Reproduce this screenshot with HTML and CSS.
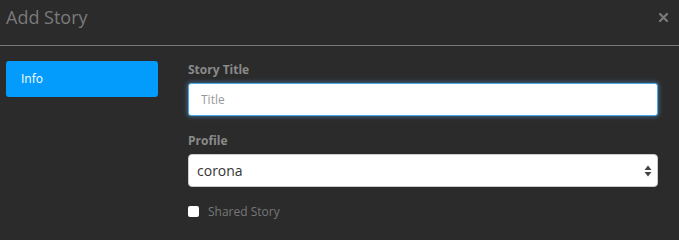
FILE: index.html
```html
<!DOCTYPE html>
<html>
<head>
<meta charset="utf-8">
<link rel="stylesheet" href="styles.css">
</head>
<body>
<div class="modal">
  <div class="header">
    <h1 class="title">Add Story</h1>
    <svg class="close" width="9" height="9" viewBox="0 0 9 9"><path d="M1 1 L8 8 M8 1 L1 8" stroke="#7a7a7a" stroke-width="2.2" stroke-linecap="square"/></svg>
  </div>
  <div class="body">
    <nav class="side">
      <a class="tab active">Info</a>
    </nav>
    <form class="form">
      <label class="label first">Story Title</label>
      <input class="input focus" type="text" placeholder="Title">
      <label class="label second">Profile</label>
      <div class="select">
        <span>corona</span>
        <svg class="arrows" width="8" height="12" viewBox="0 0 8 12"><path d="M4 0.5 L7.5 5 L0.5 5 Z M4 11.5 L7.5 7 L0.5 7 Z" fill="#444"/></svg>
      </div>
      <label class="check"><span class="box"></span>Shared Story</label>
    </form>
  </div>
</div>
</body>
</html>
```
FILE: styles.css
```css
html, body { margin: 0; padding: 0; }
body {
  background: #2b2b2b;
  font-family: "Open Sans", "DejaVu Sans", sans-serif;
  width: 679px;
  height: 240px;
  overflow: hidden;
}
.header {
  height: 46px;
  border-bottom: 1px solid #777;
  display: flex;
  align-items: flex-start;
  justify-content: space-between;
  padding: 0 11px 0 6px;
  box-sizing: border-box;
}
.title {
  margin: 0;
  margin-top: 4px;
  font-size: 18px;
  font-weight: 400;
  color: #7a7a7a;
  line-height: 26px;
}
.close {
  display: block;
  margin-top: 13px;
}
.body {
  display: flex;
  padding: 15px 21px 0 6px;
}
.side { width: 152px; margin-right: 30px; }
.tab {
  display: block;
  height: 36px;
  line-height: 36px;
  background: #039cfc;
  color: #fff;
  border-radius: 3px;
  padding-left: 15px;
  font-size: 12px;
}
.form { flex: 1; display: flex; flex-direction: column; }
.label {
  color: #8a8a8a;
  font-weight: 700;
  font-size: 12px;
  line-height: 16px;
  margin-bottom: 5px;
}
.label.first { margin-top: 1px; }
.label.second { margin-top: 17px; }
.input {
  height: 33px;
  box-sizing: border-box;
  border: 1px solid #4aa9e8;
  border-radius: 3px;
  box-shadow: 0 0 4px 1px rgba(90,170,235,0.45);
  outline: none;
  padding: 0 12px;
  font-family: inherit;
  font-size: 12px;
  background: #fff;
}
.input::placeholder { color: #999; }
.select {
  height: 33px;
  box-sizing: border-box;
  background: #fff;
  border: 1px solid #ccc;
  border-radius: 4px;
  display: flex;
  align-items: center;
  justify-content: space-between;
  padding: 0 5px 0 8px;
  font-size: 14px;
  color: #333;
}
.arrows { display: block; }
.check {
  display: flex;
  align-items: center;
  margin-top: 16px;
  color: #777;
  font-size: 12px;
}
.box {
  width: 11px;
  height: 11px;
  background: #fff;
  border-radius: 2px;
  margin-right: 9px;
}
```
